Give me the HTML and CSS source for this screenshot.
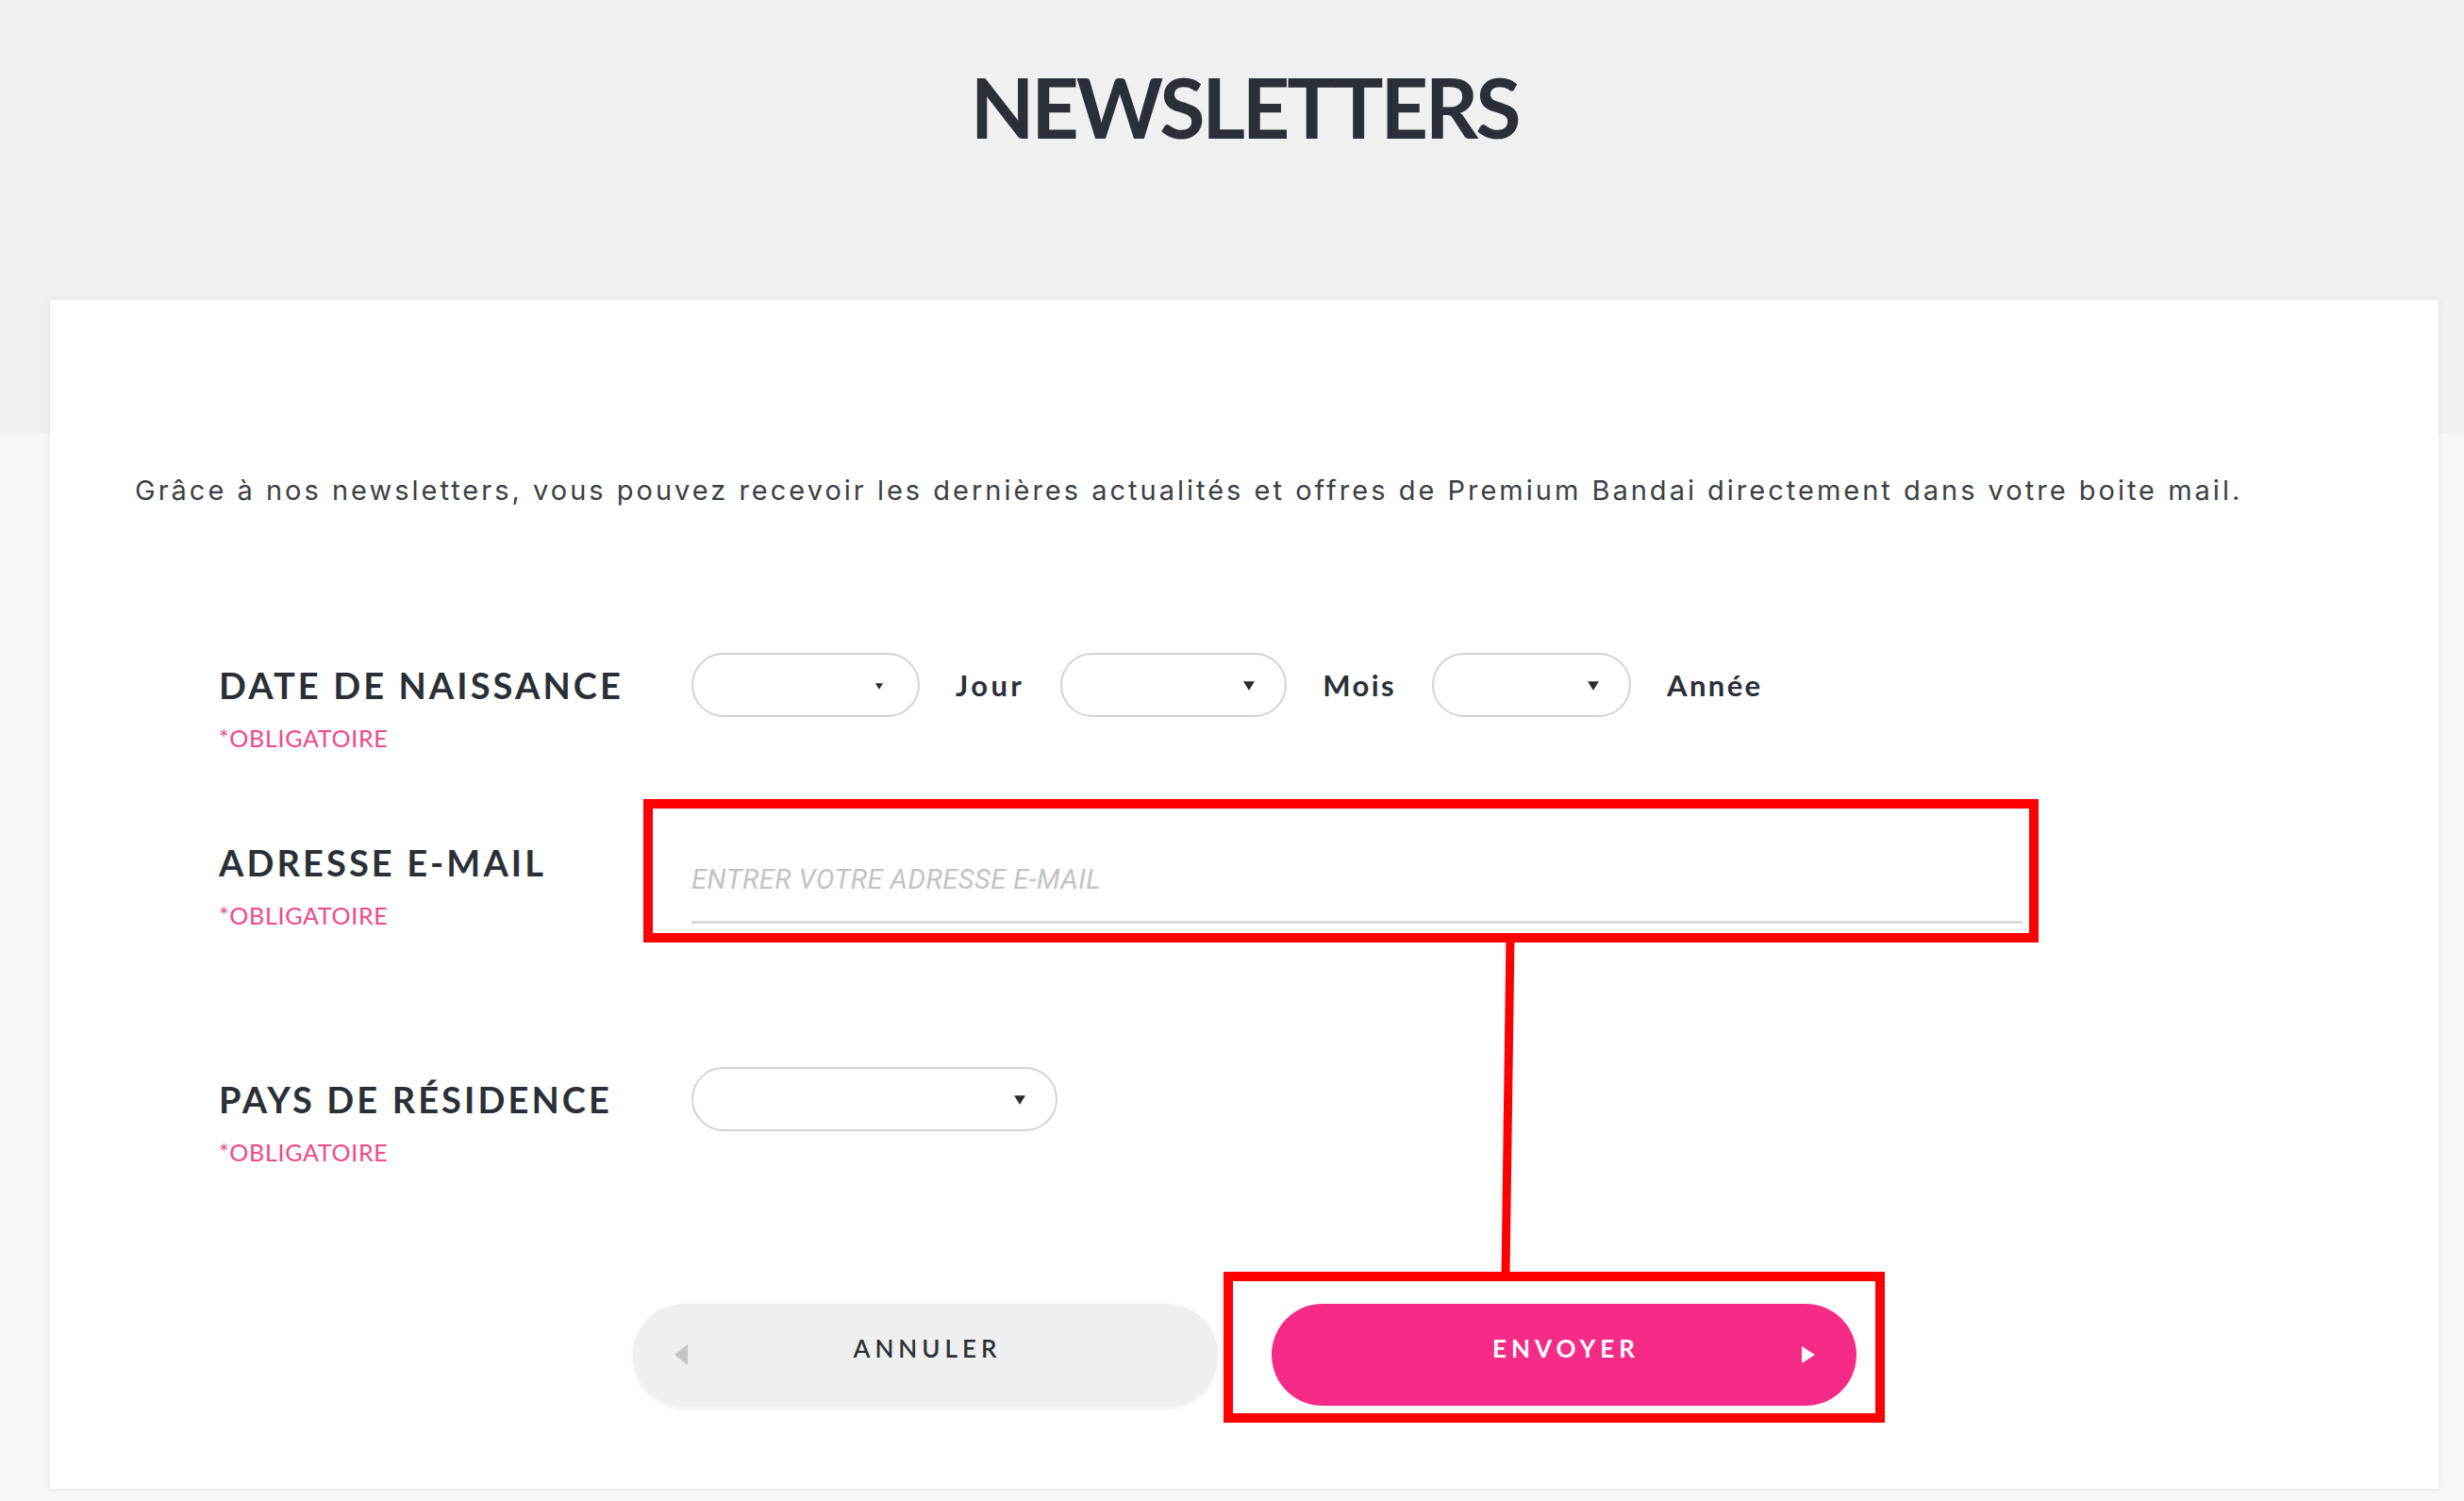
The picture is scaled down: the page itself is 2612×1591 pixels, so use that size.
FILE: index.html
```html
<!DOCTYPE html>
<html lang="fr">
<head>
<meta charset="utf-8">
<title>Newsletters</title>
<link rel="stylesheet" href="styles.css">
</head>
<body>
<div class="page">
  <h1 class="title">NEWSLETTERS</h1>
  <section class="card">
    <p class="intro">Grâce à nos newsletters, vous pouvez recevoir les dernières actualités et offres de Premium Bandai directement dans votre boite mail.</p>
    <form class="form">
      <div class="row">
        <div class="label-block">
          <div class="label">DATE DE NAISSANCE</div>
          <div class="req">*OBLIGATOIRE</div>
        </div>
        <div class="fields">
          <div class="select s-day"><select aria-label="Jour"><option></option></select><svg class="arrow small" viewBox="0 0 10 8"><path d="M0 0H10L5 8Z"/></svg></div>
          <span class="unit">Jour</span>
          <div class="select s-month"><select aria-label="Mois"><option></option></select><svg class="arrow" viewBox="0 0 10 8"><path d="M0 0H10L5 8Z"/></svg></div>
          <span class="unit">Mois</span>
          <div class="select s-year"><select aria-label="Année"><option></option></select><svg class="arrow" viewBox="0 0 10 8"><path d="M0 0H10L5 8Z"/></svg></div>
          <span class="unit">Année</span>
        </div>
      </div>
      <div class="row row-mail">
        <div class="label-block">
          <div class="label">ADRESSE E-MAIL</div>
          <div class="req">*OBLIGATOIRE</div>
        </div>
        <div class="fields">
          <input class="email" type="email" placeholder="ENTRER VOTRE ADRESSE E-MAIL">
        </div>
      </div>
      <div class="row row-country">
        <div class="label-block">
          <div class="label">PAYS DE RÉSIDENCE</div>
          <div class="req">*OBLIGATOIRE</div>
        </div>
        <div class="fields">
          <div class="select s-country"><select aria-label="Pays"><option></option></select><svg class="arrow" viewBox="0 0 10 8"><path d="M0 0H10L5 8Z"/></svg></div>
        </div>
      </div>
    </form>
    <div class="actions">
      <button class="btn btn-cancel" type="button">
        <svg class="btn-arrow" viewBox="0 0 14 22"><path d="M14 0V22L0 11Z"/></svg>
        <span class="btn-text">ANNULER</span>
        <span></span>
      </button>
      <button class="btn btn-send" type="button">
        <span></span>
        <span class="btn-text">ENVOYER</span>
        <svg class="btn-arrow" viewBox="0 0 14 18"><path d="M0 0V18L14 9Z"/></svg>
      </button>
    </div>
  </section>
</div>
<svg class="annotations" viewBox="0 0 2612 1591" width="2612" height="1591">
  <rect x="687" y="852" width="1469" height="142" fill="none" stroke="#ff0000" stroke-width="10"/>
  <line x1="1601" y1="994" x2="1596" y2="1353" stroke="#ff0000" stroke-width="9"/>
  <rect x="1302" y="1353" width="691" height="150" fill="none" stroke="#ff0000" stroke-width="10"/>
</svg>
</body>
</html>
```
FILE: styles.css
```css
* { box-sizing: border-box; }

html, body {
  margin: 0;
  padding: 0;
}

body {
  position: relative;
  min-height: 1591px;
  background: linear-gradient(to bottom, #f0f0f0 0, #f0f0f0 460px, #f7f7f7 460px, #f7f7f7 100%);
  font-family: "Lato", "Liberation Sans", sans-serif;
  color: #2c3037;
  overflow: hidden;
}

.page {
  margin-left: 53px;
  width: 2532px;
  padding-top: 61px;
}

.title {
  margin: 0;
  text-align: center;
  font-family: "Lato", sans-serif;
  font-weight: 700;
  font-size: 88px;
  line-height: 1.2;
  letter-spacing: -3.2px;
  color: #2b3038;
}

.card {
  margin-top: 151px;
  background: #ffffff;
  box-shadow: 0 0 6px rgba(0, 0, 0, 0.08);
  padding: 182px 90px 88px 90px;
}

.intro {
  margin: 0;
  font-family: "Inter", sans-serif;
  font-weight: 400;
  font-size: 29px;
  line-height: 40px;
  letter-spacing: 3px;
  color: #3c3f44;
  white-space: nowrap;
}

.form {
  margin: 152px 0 0 89px;
}

.row {
  display: grid;
  grid-template-columns: 501px auto;
  align-items: start;
}

.row-mail { margin-top: 83px; }
.row-country { margin-top: 146px; }

.label {
  font-weight: 700;
  font-size: 38px;
  line-height: 68px;
  letter-spacing: 3.1px;
  color: #2b3038;
  white-space: nowrap;
}

.req {
  margin-top: 7px;
  font-weight: 400;
  font-size: 25px;
  line-height: 30px;
  letter-spacing: 0.7px;
  color: #f0488a;
}

.fields {
  display: flex;
  align-items: center;
  gap: 38px;
}

.select {
  position: relative;
  height: 68px;
  border: 2px solid #d3d3d3;
  border-radius: 34px;
  background: #fff;
}

.select select {
  appearance: none;
  -webkit-appearance: none;
  width: 100%;
  height: 100%;
  border: 0;
  background: transparent;
  border-radius: 34px;
  outline: none;
  font: inherit;
}

.s-day { width: 242px; }
.s-month { width: 240px; }
.s-year { width: 211px; }
.s-country { width: 388px; }

.arrow {
  position: absolute;
  right: 32px;
  top: 28px;
  width: 12px;
  height: 10px;
  fill: #2b2b2b;
  pointer-events: none;
}

.arrow.small {
  right: 37px;
  top: 30px;
  width: 8px;
  height: 7px;
}

.unit {
  font-weight: 700;
  font-size: 31px;
  letter-spacing: 2.4px;
  color: #2b3038;
}

.unit:first-of-type { letter-spacing: 3.4px; }

.email {
  width: 1411px;
  height: 99px;
  padding: 34px 0 26px 0;
  border: 0;
  border-bottom: 3px solid #dadada;
  background: transparent;
  outline: none;
  font-family: "Roboto", sans-serif;
  font-style: italic;
  font-size: 29px;
  line-height: 36px;
  color: #333;
}

.email::placeholder {
  color: #c3c3c3;
  letter-spacing: 0.5px;
  font-style: italic;
}

.actions {
  margin-top: 146px;
  display: flex;
  justify-content: center;
  gap: 57px;
}

.btn {
  width: 620px;
  height: 108px;
  border: 0;
  border-radius: 54px;
  display: grid;
  grid-template-columns: 1fr auto 1fr;
  align-items: center;
  padding: 0 44px 14px 44px;
  font-family: "Lato", sans-serif;
  font-size: 26px;
  letter-spacing: 5px;
  cursor: pointer;
}

.btn-text { padding-left: 5px; }

.btn-arrow { margin-top: 14px; }

.btn-cancel {
  background: #efefef;
  color: #2e3238;
  font-weight: 600;
  box-shadow: 0 3px 5px rgba(0, 0, 0, 0.07);
}

.btn-cancel .btn-arrow {
  justify-self: start;
  width: 14px;
  height: 22px;
  fill: #c4c4c4;
}

.btn-send {
  background: #f62a87;
  color: #ffffff;
  font-weight: 700;
}

.btn-send .btn-arrow {
  justify-self: end;
  width: 14px;
  height: 18px;
  fill: #ffffff;
}

.annotations {
  position: absolute;
  top: 0;
  left: 0;
  pointer-events: none;
}
```
